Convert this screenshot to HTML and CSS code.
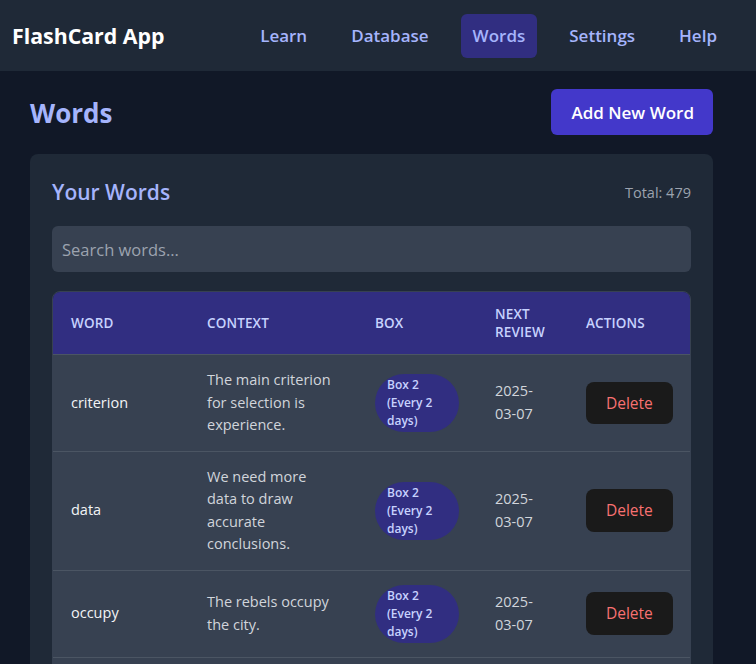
FILE: index.html
```html
<!DOCTYPE html>
<html lang="en">
<head>
<meta charset="utf-8">
<title>FlashCard App</title>
<link rel="stylesheet" href="styles.css">
</head>
<body>
<nav class="navbar">
  <div class="brand">FlashCard App</div>
  <div class="nav-links">
    <a class="nav-link">Learn</a>
    <a class="nav-link">Database</a>
    <a class="nav-link active">Words</a>
    <a class="nav-link">Settings</a>
    <a class="nav-link">Help</a>
  </div>
</nav>
<main class="main">
  <div class="page-head">
    <h1 class="page-title">Words</h1>
    <button class="btn-primary">Add New Word</button>
  </div>
  <section class="card">
    <div class="card-head">
      <h2 class="card-title">Your Words</h2>
      <span class="total">Total: 479</span>
    </div>
    <input class="search" type="text" placeholder="Search words...">
    <div class="table-wrap">
      <table class="words-table">
        <colgroup>
          <col class="c-word"><col class="c-context"><col class="c-box"><col class="c-next"><col class="c-actions">
        </colgroup>
        <thead>
          <tr><th>Word</th><th>Context</th><th>Box</th><th>Next Review</th><th>Actions</th></tr>
        </thead>
        <tbody>
          <tr>
            <td class="word">criterion</td>
            <td class="context">The main criterion for selection is experience.</td>
            <td><span class="badge">Box 2 (Every 2 days)</span></td>
            <td class="date">2025-03-07</td>
            <td><button class="btn-delete">Delete</button></td>
          </tr>
          <tr>
            <td class="word">data</td>
            <td class="context">We need more data to draw accurate conclusions.</td>
            <td><span class="badge">Box 2 (Every 2 days)</span></td>
            <td class="date">2025-03-07</td>
            <td><button class="btn-delete">Delete</button></td>
          </tr>
          <tr>
            <td class="word">occupy</td>
            <td class="context">The rebels occupy the city.</td>
            <td><span class="badge">Box 2 (Every 2 days)</span></td>
            <td class="date">2025-03-07</td>
            <td><button class="btn-delete">Delete</button></td>
          </tr>
          <tr>
            <td class="word">analyze</td>
            <td class="context">Scientists analyze the samples.</td>
            <td><span class="badge">Box 2 (Every 2 days)</span></td>
            <td class="date">2025-03-07</td>
            <td><button class="btn-delete">Delete</button></td>
          </tr>
        </tbody>
      </table>
    </div>
  </section>
</main>
</body>
</html>
```

FILE: styles.css
```css
* { box-sizing: border-box; }
html, body { margin: 0; padding: 0; }
body {
  background: #111827;
  color: #e5e7eb;
  font-family: "Open Sans", "Noto Sans", sans-serif;
  line-height: 1.5;
  overflow: hidden;
}
.navbar {
  height: 71px;
  background: #1f2937;
  display: flex;
  align-items: center;
  justify-content: space-between;
  padding: 0 27px 0 12px;
}
.brand {
  color: #ffffff;
  font-size: 21.3px;
  font-weight: 700;
}
.nav-links { display: flex; gap: 20px; }
.nav-link {
  color: #a5b4fc;
  font-size: 17px;
  font-weight: 600;
  line-height: 28px;
  padding: 8px 12px;
  border-radius: 6px;
}
.nav-link.active { background: #312e81; }
.main { padding: 18px 43px 0 30px; }
.page-head {
  display: flex;
  align-items: center;
  justify-content: space-between;
  height: 46px;
  margin-bottom: 19px;
}
.page-title {
  margin: 0;
  font-size: 26px;
  font-weight: 700;
  color: #a5b4fc;
  position: relative;
  top: 1px;
}
.btn-primary {
  background: #4338ca;
  color: #fff;
  border: none;
  border-radius: 6px;
  font-family: inherit;
  font-size: 17px;
  font-weight: 600;
  height: 46px;
  padding: 0 19px 0 20px;
}
.card {
  background: #1f2937;
  border-radius: 8px;
  padding: 22px 22px 0 22px;
}
.card-head {
  display: flex;
  align-items: center;
  justify-content: space-between;
  height: 33px;
  margin-bottom: 17px;
}
.card-title {
  margin: 0;
  font-size: 21px;
  font-weight: 600;
  color: #a5b4fc;
}
.total { color: #9ca3af; font-size: 14.5px; }
.search {
  display: block;
  width: 100%;
  height: 46px;
  background: #374151;
  border: none;
  border-radius: 6px;
  padding: 0 10px;
  font-family: inherit;
  font-size: 16.5px;
  color: #e5e7eb;
  margin-bottom: 19px;
}
.search::placeholder { color: #9ca3af; }
.table-wrap {
  border: 1px solid #374151;
  border-radius: 8px 8px 0 0;
  overflow: hidden;
}
.words-table {
  width: 100%;
  border-collapse: collapse;
  table-layout: fixed;
}
.c-word { width: 136px; }
.c-context { width: 168px; }
.c-box { width: 120px; }
.c-next { width: 91px; }
.c-actions { width: auto; }
.words-table th {
  background: #312e81;
  color: #c7d2fe;
  text-align: left;
  text-transform: uppercase;
  font-size: 13.5px;
  font-weight: 600;
  line-height: 18px;
  padding: 13px 18px;
  letter-spacing: 0.01em;
}
.words-table td {
  background: #374151;
  border-top: 1px solid #4b5563;
  padding: 14px 18px;
  font-size: 14.5px;
  line-height: 22.5px;
  vertical-align: middle;
}
.word { color: #f3f4f6; }
.context, .date { color: #d1d5db; }
.badge {
  display: inline-block;
  background: #312e81;
  color: #c7d2fe;
  font-size: 12px;
  font-weight: 600;
  line-height: 18px;
  padding: 2px 12px;
  border-radius: 9999px;
  width: 84px;
}
.btn-delete {
  background: #1a1a1a;
  color: #f87171;
  border: 1px solid transparent;
  border-radius: 8px;
  font-family: inherit;
  font-size: 15.5px;
  font-weight: 500;
  line-height: 22.5px;
  padding: 9px 19px;
}
```
